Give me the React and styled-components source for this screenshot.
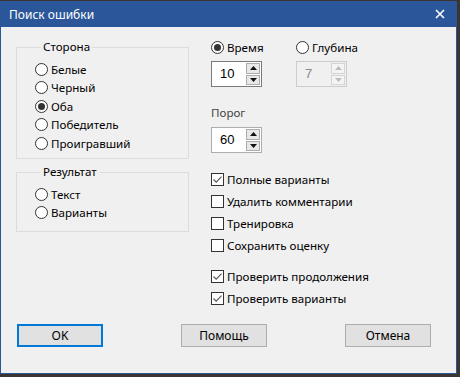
import React from 'react'
import styled, { createGlobalStyle, css } from 'styled-components'

const Global = createGlobalStyle`
    html, body {
        margin: 0;
        padding: 0;
        background: #3b3430;
        overflow: hidden;
    }
    body {
        font-family: "Noto Sans", "Open Sans", sans-serif;
        font-size: 11.6px;
        color: #000;
    }
`;

const Window = styled.div`
    width: 455px;
    height: 372px;
    margin-top: 1px;
    border: 1px solid #2b579a;
    border-top: none;
    background: #f0f0f0;
    display: flex;
    flex-direction: column;
`;

const TitleBar = styled.div`
    height: 26px;
    background: #2b579a;
    color: #fff;
    display: flex;
    align-items: center;
    justify-content: space-between;
    padding: 0 11px 0 8px;
    font-size: 12px;
`;

const Body = styled.div`
    flex: 1;
    display: grid;
    grid-template-columns: 173px 1fr;
    column-gap: 22px;
    padding: 12px 0 0 15px;
`;

const Column = styled.div`
    display: flex;
    flex-direction: column;
`;

const Group = styled.fieldset`
    margin: ${props => props.top || 0}px 0 0 0;
    padding: ${props => props.pad || 5}px 0 ${props => props.bottom || 5}px 18px;
    border: 1px solid #dcdcdc;
    min-width: 0;
    height: ${props => props.h}px;
    box-sizing: border-box;
    legend {
        margin-left: 6px;
        padding: 0 2px;
        line-height: 16px;
    }
`;

const Option = styled.label`
    display: flex;
    align-items: center;
    height: ${props => props.h || 18.5}px;
    gap: 3px;
    white-space: nowrap;
    color: ${props => props.disabled ? '#6d6d6d' : '#000'};
`;

const RadioMark = styled.span`
    width: 13px;
    height: 13px;
    box-sizing: border-box;
    border: 1px solid #333;
    border-radius: 50%;
    background: #fff;
    display: flex;
    align-items: center;
    justify-content: center;
    flex-shrink: 0;
    ${props => props.checked && css`
        &::after {
            content: '';
            width: 7px;
            height: 7px;
            border-radius: 50%;
            background: #333;
        }
    `}
`;

const CheckMark = styled.span`
    width: 13px;
    height: 13px;
    box-sizing: border-box;
    border: 1px solid #333;
    background: #fff;
    display: flex;
    flex-shrink: 0;
`;

const Row = styled.div`
    display: flex;
`;

const Field = styled.div`
    display: flex;
    flex-direction: column;
    gap: 6px;
    width: ${props => props.w || 'auto'};
    margin-top: ${props => props.top || 0}px;
`;

const Spin = styled.div`
    display: flex;
    width: 51px;
    height: 26px;
    box-sizing: border-box;
    border: 1px solid ${props => props.focused ? '#7a7a7a' : props.disabled ? '#cccccc' : '#adadad'};
    background: ${props => props.disabled ? '#f0f0f0' : '#fff'};
    padding: 1px 1px 1px 0;
`;

const SpinText = styled.span`
    flex: 1;
    padding-left: 8px;
    line-height: 22px;
    font-size: 13px;
    font-family: "Liberation Sans", Arial, sans-serif;
    color: ${props => props.disabled ? '#8a8a8a' : '#000'};
`;

const SpinButtons = styled.div`
    display: flex;
    flex-direction: column;
    gap: 1px;
    width: 14px;
`;

const SpinBtn = styled.div`
    flex: 1;
    border: 1px solid ${props => props.disabled ? '#d4d4d4' : '#acacac'};
    background: ${props => props.disabled ? '#f4f4f4' : '#e8e8e8'};
    display: flex;
    align-items: center;
    justify-content: center;
    svg { fill: ${props => props.disabled ? '#bcbcbc' : '#111'}; }
`;

const Label = styled.div`
    color: #444;
    line-height: 16px;
`;

const Checks = styled.div`
    display: flex;
    flex-direction: column;
    margin-top: ${props => props.top || 0}px;
`;

const Footer = styled.div`
    display: flex;
    justify-content: space-between;
    padding: 0 25px 26px 16px;
`;

const Button = styled.button`
    width: 86px;
    height: 23px;
    box-sizing: border-box;
    border: 1px solid #adadad;
    background: #e1e1e1;
    font-family: inherit;
    font-size: 12px;
    color: #000;
    padding: 0;
    ${props => props.primary && css`
        border: 2px solid #0078d7;
    `}
`;

const Radio = ({ checked, children, h, disabled }) => (
    <Option h={h} disabled={disabled}>
        <RadioMark checked={checked} />
        {children}
    </Option>
)

const Check = ({ checked, children }) => (
    <Option h={22}>
        <CheckMark>
            {checked && (
                <svg width="11" height="11" viewBox="0 0 11 11">
                    <path d="M1.5 5.5 L4.2 8.2 L9.5 2.6" fill="none" stroke="#555" strokeWidth="1.1" />
                </svg>
            )}
        </CheckMark>
        {children}
    </Option>
)

const Arrow = ({ up }) => (
    <svg width="7" height="4" viewBox="0 0 7 4">
        {up ? <path d="M0 4 L3.5 0 L7 4 Z" /> : <path d="M0 0 L3.5 4 L7 0 Z" />}
    </svg>
)

const Spinner = ({ value, focused, disabled }) => (
    <Spin focused={focused} disabled={disabled}>
        <SpinText disabled={disabled}>{value}</SpinText>
        <SpinButtons>
            <SpinBtn disabled={disabled}><Arrow up /></SpinBtn>
            <SpinBtn disabled={disabled}><Arrow /></SpinBtn>
        </SpinButtons>
    </Spin>
)

export default function App() {
    return (
        <>
            <Global />
            <Window>
                <TitleBar>
                    <span>Поиск ошибки</span>
                    <svg width="10" height="10" viewBox="0 0 10 10">
                        <path d="M1 1 L9 9 M9 1 L1 9" stroke="#fff" strokeWidth="1.6" />
                    </svg>
                </TitleBar>
                <Body>
                    {/* left column */}
                    <Column>
                        <Group h={120} pad={5}>
                            <legend>Сторона</legend>
                            <Radio>Белые</Radio>
                            <Radio>Черный</Radio>
                            <Radio checked>Оба</Radio>
                            <Radio>Победитель</Radio>
                            <Radio>Проигравший</Radio>
                        </Group>
                        <Group h={68} top={5} pad={5}>
                            <legend>Результат</legend>
                            <Radio>Текст</Radio>
                            <Radio>Варианты</Radio>
                        </Group>
                    </Column>

                    {/* right column */}
                    <Column>
                        <Row>
                            <Field w="85px">
                                <Radio checked h={16}>Время</Radio>
                                <Spinner value="10" focused />
                            </Field>
                            <Field>
                                <Radio h={16}>Глубина</Radio>
                                <Spinner value="7" disabled />
                            </Field>
                        </Row>
                        <Field top={18}>
                            <Label>Порог</Label>
                            <Spinner value="60" />
                        </Field>
                        <Checks top={15}>
                            <Check checked>Полные варианты</Check>
                            <Check>Удалить комментарии</Check>
                            <Check>Тренировка</Check>
                            <Check>Сохранить оценку</Check>
                        </Checks>
                        <Checks top={9}>
                            <Check checked>Проверить продолжения</Check>
                            <Check checked>Проверить варианты</Check>
                        </Checks>
                    </Column>
                </Body>
                <Footer>
                    <Button primary>OK</Button>
                    <Button>Помощь</Button>
                    <Button>Отмена</Button>
                </Footer>
            </Window>
        </>
    )
}
